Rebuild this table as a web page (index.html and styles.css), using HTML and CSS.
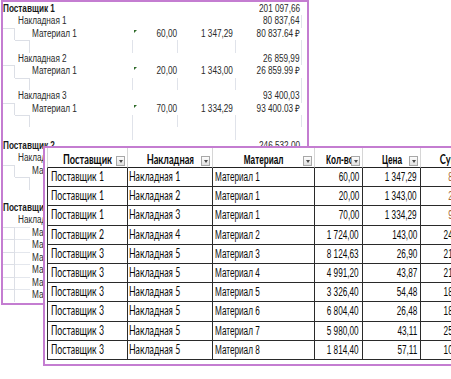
FILE: index.html
```html
<!DOCTYPE html>
<html lang="ru">
<head>
<meta charset="utf-8">
<title>Сводная таблица</title>
<link rel="stylesheet" href="styles.css">
</head>
<body>
<div class="sheet">
  <div class="r sup"><div class="c s-name"><span class="t">Поставщик 1</span></div><div class="c s-val num"><span class="t">201 097,66</span></div></div>
  <div class="r nak"><div class="c n-name"><span class="t">Накладная 1</span></div><div class="c g6 num"><span class="t">80 837,64</span></div></div>
  <div class="r mat"><div class="c g1"></div><div class="c"></div><div class="c m-name"><span class="t">Материал 1</span></div><div class="c g4 num mark"><span class="t">60,00</span></div><div class="c g5 num"><span class="t">1 347,29</span></div><div class="c g6 num"><span class="t">80 837.64 ₽</span></div></div>
  <div class="r emp"><div class="c"></div><div class="c g2"></div><div class="c g3"></div><div class="c g4"></div><div class="c g5"></div><div class="c g6"></div></div>
  <div class="r nak"><div class="c n-name"><span class="t">Накладная 2</span></div><div class="c g6 num"><span class="t">26 859,99</span></div></div>
  <div class="r mat"><div class="c g1"></div><div class="c"></div><div class="c m-name"><span class="t">Материал 1</span></div><div class="c g4 num mark"><span class="t">20,00</span></div><div class="c g5 num"><span class="t">1 343,00</span></div><div class="c g6 num"><span class="t">26 859.99 ₽</span></div></div>
  <div class="r emp"><div class="c"></div><div class="c g2"></div><div class="c g3"></div><div class="c g4"></div><div class="c g5"></div><div class="c g6"></div></div>
  <div class="r nak"><div class="c n-name"><span class="t">Накладная 3</span></div><div class="c g6 num"><span class="t">93 400,03</span></div></div>
  <div class="r mat"><div class="c g1"></div><div class="c"></div><div class="c m-name"><span class="t">Материал 1</span></div><div class="c g4 num mark"><span class="t">70,00</span></div><div class="c g5 num"><span class="t">1 334,29</span></div><div class="c g6 num"><span class="t">93 400.03 ₽</span></div></div>
  <div class="r emp"><div class="c"></div><div class="c g2"></div><div class="c g3"></div><div class="c g4"></div><div class="c g5"></div><div class="c g6"></div></div>
  <div class="r emp"><div class="c"></div><div class="c"></div><div class="c g3"></div><div class="c"></div><div class="c g5"></div><div class="c"></div></div>
  <div class="r sup"><div class="c s-name"><span class="t">Поставщик 2</span></div><div class="c s-val num"><span class="t">246 532,00</span></div></div>
  <div class="r nak"><div class="c n-name"><span class="t">Накладная 4</span></div><div class="c g6 num"><span class="t">246 532,00</span></div></div>
  <div class="r mat"><div class="c g1"></div><div class="c"></div><div class="c m-name"><span class="t">Материал 2</span></div><div class="c g4 num mark"><span class="t">1 724,00</span></div><div class="c g5 num"><span class="t">143,00</span></div><div class="c g6 num"><span class="t">246 532.00 ₽</span></div></div>
  <div class="r emp"><div class="c"></div><div class="c g2"></div><div class="c g3"></div><div class="c g4"></div><div class="c g5"></div><div class="c g6"></div></div>
  <div class="r emp"><div class="c"></div><div class="c"></div><div class="c"></div><div class="c"></div><div class="c"></div><div class="c"></div></div>
  <div class="r sup"><div class="c s-name"><span class="t">Поставщик 3</span></div><div class="c s-val num"><span class="t">1 160 337,45</span></div></div>
  <div class="r nak"><div class="c n-name"><span class="t">Накладная 5</span></div><div class="c g6 num"><span class="t">1 160 337,45</span></div></div>
  <div class="r mat"><div class="c g1"></div><div class="c g2t"></div><div class="c m-name"><span class="t">Материал 3</span></div><div class="c g4 num mark"><span class="t">8 124,63</span></div><div class="c g5 num"><span class="t">26,90</span></div><div class="c g6 num"><span class="t">218 552.55 ₽</span></div></div>
  <div class="r mat"><div class="c g1"></div><div class="c g2t"></div><div class="c m-name"><span class="t">Материал 4</span></div><div class="c g4 num mark"><span class="t">4 991,20</span></div><div class="c g5 num"><span class="t">43,87</span></div><div class="c g6 num"><span class="t">218 963.94 ₽</span></div></div>
  <div class="r mat"><div class="c g1"></div><div class="c g2t"></div><div class="c m-name"><span class="t">Материал 5</span></div><div class="c g4 num mark"><span class="t">3 326,40</span></div><div class="c g5 num"><span class="t">54,48</span></div><div class="c g6 num"><span class="t">181 222.27 ₽</span></div></div>
  <div class="r mat"><div class="c g1"></div><div class="c g2t"></div><div class="c m-name"><span class="t">Материал 6</span></div><div class="c g4 num mark"><span class="t">6 804,40</span></div><div class="c g5 num"><span class="t">26,48</span></div><div class="c g6 num"><span class="t">180 180.51 ₽</span></div></div>
  <div class="r mat"><div class="c g1"></div><div class="c g2t"></div><div class="c m-name"><span class="t">Материал 7</span></div><div class="c g4 num mark"><span class="t">5 980,00</span></div><div class="c g5 num"><span class="t">43,11</span></div><div class="c g6 num"><span class="t">257 797.80 ₽</span></div></div>
  <div class="r mat"><div class="c g1"></div><div class="c g2t"></div><div class="c m-name"><span class="t">Материал 8</span></div><div class="c g4 num mark"><span class="t">1 814,40</span></div><div class="c g5 num"><span class="t">57,11</span></div><div class="c g6 num"><span class="t">103 620.38 ₽</span></div></div>
</div>

<div class="win">
  <table class="tbl">
    <colgroup>
      <col class="w1"><col class="w2"><col class="w3"><col class="w4"><col class="w5"><col class="w6">
    </colgroup>
    <thead>
      <tr>
        <th class="first"><span class="cal">Поставщик</span><span class="dd"></span></th>
        <th><span class="cal">Накладная</span><span class="dd"></span></th>
        <th><span class="nar">Материал</span><span class="dd"></span></th>
        <th><span class="nar">Кол-во</span><span class="dd"></span></th>
        <th><span class="nar">Цена</span><span class="dd"></span></th>
        <th><span class="cal">Сумма</span><span class="dd"></span></th>
      </tr>
    </thead>
    <tbody>
      <tr><td class="first"><span class="cal">Поставщик 1</span></td><td class="c2"><span class="cal">Накладная 1</span></td><td class="c3"><span class="nar">Материал 1</span></td><td class="num"><span class="nar">60,00</span></td><td class="num"><span class="nar">1 347,29</span></td><td class="num warm"><span class="nar">80 837,40</span></td></tr>
      <tr><td class="first"><span class="cal">Поставщик 1</span></td><td class="c2"><span class="cal">Накладная 2</span></td><td class="c3"><span class="nar">Материал 1</span></td><td class="num"><span class="nar">20,00</span></td><td class="num"><span class="nar">1 343,00</span></td><td class="num warm"><span class="nar">26 860,00</span></td></tr>
      <tr><td class="first"><span class="cal">Поставщик 1</span></td><td class="c2"><span class="cal">Накладная 3</span></td><td class="c3"><span class="nar">Материал 1</span></td><td class="num"><span class="nar">70,00</span></td><td class="num"><span class="nar">1 334,29</span></td><td class="num warm"><span class="nar">93 400,30</span></td></tr>
      <tr><td class="first"><span class="cal">Поставщик 2</span></td><td class="c2"><span class="cal">Накладная 4</span></td><td class="c3"><span class="nar">Материал 2</span></td><td class="num"><span class="nar">1 724,00</span></td><td class="num"><span class="nar">143,00</span></td><td class="num"><span class="nar">246 532,00</span></td></tr>
      <tr><td class="first"><span class="cal">Поставщик 3</span></td><td class="c2"><span class="cal">Накладная 5</span></td><td class="c3"><span class="nar">Материал 3</span></td><td class="num"><span class="nar">8 124,63</span></td><td class="num"><span class="nar">26,90</span></td><td class="num"><span class="nar">218 552,55</span></td></tr>
      <tr><td class="first"><span class="cal">Поставщик 3</span></td><td class="c2"><span class="cal">Накладная 5</span></td><td class="c3"><span class="nar">Материал 4</span></td><td class="num"><span class="nar">4 991,20</span></td><td class="num"><span class="nar">43,87</span></td><td class="num"><span class="nar">218 963,94</span></td></tr>
      <tr><td class="first"><span class="cal">Поставщик 3</span></td><td class="c2"><span class="cal">Накладная 5</span></td><td class="c3"><span class="nar">Материал 5</span></td><td class="num"><span class="nar">3 326,40</span></td><td class="num"><span class="nar">54,48</span></td><td class="num"><span class="nar">181 222,27</span></td></tr>
      <tr><td class="first"><span class="cal">Поставщик 3</span></td><td class="c2"><span class="cal">Накладная 5</span></td><td class="c3"><span class="nar">Материал 6</span></td><td class="num"><span class="nar">6 804,40</span></td><td class="num"><span class="nar">26,48</span></td><td class="num"><span class="nar">180 180,51</span></td></tr>
      <tr><td class="first"><span class="cal">Поставщик 3</span></td><td class="c2"><span class="cal">Накладная 5</span></td><td class="c3"><span class="nar">Материал 7</span></td><td class="num"><span class="nar">5 980,00</span></td><td class="num"><span class="nar">43,11</span></td><td class="num"><span class="nar">257 797,80</span></td></tr>
      <tr><td class="first"><span class="cal">Поставщик 3</span></td><td class="c2"><span class="cal">Накладная 5</span></td><td class="c3"><span class="nar">Материал 8</span></td><td class="num"><span class="nar">1 814,40</span></td><td class="num"><span class="nar">57,11</span></td><td class="num"><span class="nar">103 620,38</span></td></tr>
    </tbody>
  </table>
</div>
</body>
</html>
```

FILE: styles.css
```css
* { box-sizing: border-box; margin: 0; padding: 0; }
html, body { width: 451px; height: 379px; overflow: hidden; background: #fff; }
body { position: relative; font-family: "Liberation Sans", Arial, sans-serif; }

/* ---------- back window: pivot report ---------- */
.sheet {
  position: absolute;
  left: 1px;
  top: 0;
  width: 308px;
  height: 305px;
  border: 2px solid #c47dd1;
  background: #fff;
  padding-top: 1px;
}
.r {
  display: grid;
  grid-template-columns: 12px 15px 103px 45px 58px 66px 1fr;
  height: 12.45px;
  font-size: 10px;
  line-height: 12.45px;
  color: #2a2a2a;
}
.c { position: relative; white-space: nowrap; }
.t { display: inline-block; transform: scaleX(.82); transform-origin: 0 50%; }
.num { text-align: right; }
.num .t { transform-origin: 100% 50%; }

.s-name { grid-column: 1 / 4; padding-left: 0; font-weight: bold; color: #1a1a1a; }
.s-val { grid-column: 6; padding-right: 2px; }
.n-name { grid-column: 2 / 4; padding-left: 3px; }
.nak .g6 { grid-column: 6; padding-right: 2px; }
.m-name { padding-left: 2px; }
.mat .g4 { padding-right: 1px; }
.mat .g5 { padding-right: 3px; }
.mat .g6 { padding-right: 2px; }

.mat .g1 { border-top: 1px solid #dcdfe6; border-right: 1px solid #dcdfe6; }
.mat .g2t { border-top: 1px solid #e4e7ed; }
.emp .g2 { border-top: 1px solid #dcdfe6; border-right: 1px solid #dcdfe6; }
.emp .g3, .emp .g4, .emp .g5 { border-right: 1px solid #e0e3ea; }
.emp .g6 { border-right: 1px solid #e0e3ea; }
.nak .g6 { border-right: 1px solid #e0e3ea; }

.mark::before {
  content: "";
  position: absolute;
  left: 1px;
  top: 2px;
  width: 0;
  height: 0;
  border-top: 3px solid #2f6b2a;
  border-right: 3px solid transparent;
}

/* ---------- front window: data table ---------- */
.win {
  position: absolute;
  left: 43px;
  top: 146px;
  width: 470px;
  height: 220px;
  border: 2px solid #c47dd1;
  border-right: 0;
  background: #fff;
  padding-left: 2px;
}
.tbl {
  border-collapse: separate;
  border-spacing: 0;
  table-layout: fixed;
  width: 442px;
  color: #0a0a0a;
}
.w1 { width: 81px; }
.w2 { width: 85px; }
.w3 { width: 102px; }
.w4 { width: 48px; }
.w5 { width: 58px; }
.w6 { width: 68px; }

.tbl th, .tbl td {
  white-space: nowrap;
  overflow: hidden;
  padding: 0 3px;
  font-size: 12.5px;
}
.tbl th {
  position: relative;
  height: 20px;
  line-height: 13px;
  font-size: 13px;
  vertical-align: bottom;
  padding-bottom: 1px;
  text-align: center;
  font-weight: bold;
  border-bottom: 1px solid #222;
  border-right: 1px solid #d6d6d6;
}
.tbl th.first { border-left: 1px solid #d6d6d6; }
.tbl td {
  height: 19.2px;
  line-height: 14px;
  vertical-align: middle;
  text-align: left;
  border-bottom: 1px solid #2a2a2a;
  border-right: 1px solid #2a2a2a;
}
.tbl td.first { border-left: 1px solid #2a2a2a; }
.tbl td.c2 { padding-left: 1px; }
.tbl td.c3 { padding-left: 2px; }
.tbl td.num { text-align: right; }
.tbl td.warm { color: #a4652f; }

.cal {
  display: inline-block;
  font-family: "Lato", "Carlito", "Open Sans", sans-serif;
  transform: scaleX(.7);
  transform-origin: 0 50%;
}
.nar {
  display: inline-block;
  font-family: "Liberation Sans", Arial, sans-serif;
  transform: scaleX(.655);
  transform-origin: 0 50%;
}
.tbl th .cal { transform: scaleX(.71); transform-origin: 50% 50%; }
.tbl th .nar { transform: scaleX(.63); transform-origin: 50% 50%; }
.tbl td.num .nar { transform-origin: 100% 50%; margin-left: -30px; }

.dd {
  position: absolute;
  right: 2px;
  bottom: 1px;
  width: 9px;
  height: 10px;
  border: 1px solid #a8a8a8;
  background: linear-gradient(#fdfdfd, #e1e1e1);
}
.dd::after {
  content: "";
  position: absolute;
  left: 1.5px;
  top: 3px;
  width: 0;
  height: 0;
  border-left: 2.5px solid transparent;
  border-right: 2.5px solid transparent;
  border-top: 3px solid #4a4a4a;
}
```
